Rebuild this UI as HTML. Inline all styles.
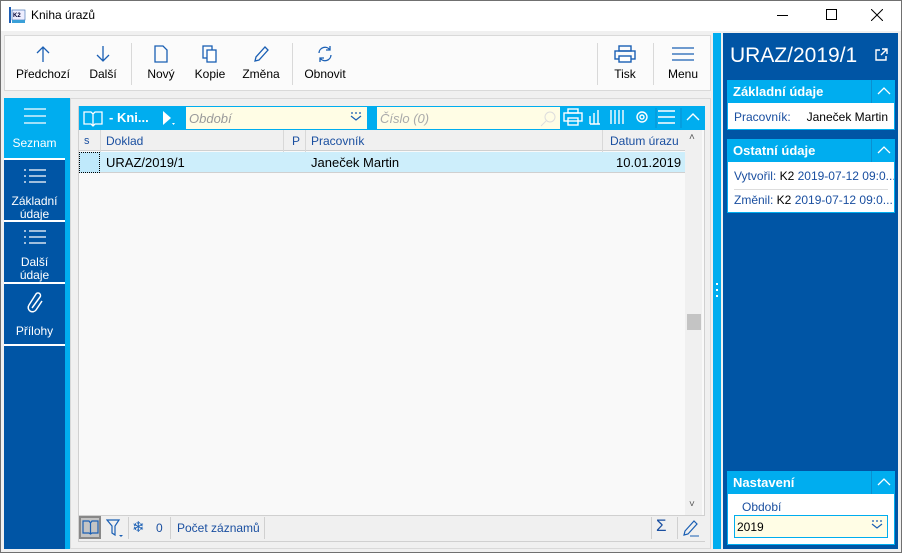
<!DOCTYPE html>
<html><head><meta charset="utf-8"><style>
*{box-sizing:border-box;margin:0;padding:0}
body{width:902px;height:553px;background:#f0f0f0;font-family:"Liberation Sans",sans-serif;font-size:12px;position:relative;overflow:hidden;color:#000}
.a{position:absolute}
.win{left:0;top:0;width:902px;height:553px;border:1px solid #707070}
.tb{left:4px;top:35px;width:707px;height:56px;background:#fbfbfb;border:1px solid #d9d9d9}
.btn{position:absolute;top:0;text-align:center;font-size:12px}
.btn svg{display:block;margin:9px auto 4px}
.sep{position:absolute;top:7px;width:1px;height:42px;background:#d9d9d9}
.nav{left:4px;top:98px;width:61px;height:451px;background:#0055a5}
.navi{position:absolute;left:4px;width:61px;color:#fff;text-align:center;font-size:12px;line-height:13px;border-bottom:2px solid #fff}
.hdr{background:#00adef;color:#fff;font-weight:bold;font-size:13px;height:23px;line-height:23px;padding-left:6px;position:relative}
.hdr .up{position:absolute;right:0;top:0;width:24px;height:23px;border-left:1px solid #0a8fd0}
.box{background:#fff;border:1px solid #00adef;border-top:none}
.blue{color:#1a4fa0}
</style></head><body>
<div class="a win"></div>
<div class="a" style="left:1px;top:1px;width:900px;height:30px;background:#fff"></div>
<svg class="a" style="left:9px;top:7px" width="17" height="17"><rect x="0" y="0" width="2" height="16" fill="#1f5fb5"/><rect x="3" y="3" width="13" height="10" fill="#eef" stroke="#3366aa" stroke-width=".6"/><text x="4" y="10" font-size="6" font-weight="bold" fill="#003">K2</text><rect x="3" y="13" width="13" height="3" fill="#3aa0d8"/></svg>
<div class="a" style="left:31px;top:8px;font-size:12px">Kniha úrazů</div>
<div class="a" style="left:777px;top:15px;width:11px;height:1px;background:#000"></div>
<div class="a" style="left:826px;top:9px;width:11px;height:11px;border:1px solid #000"></div>
<svg class="a" style="left:871px;top:9px" width="12" height="12"><path d="M0 0L12 12M12 0L0 12" stroke="#000" stroke-width="1"/></svg>
<div class="a tb">
 <div class="btn" style="left:8px;width:60px"><svg width="14" height="18"><path d="M7 2V17M1 8L7 2L13 8" stroke="#1a5fb4" fill="none" stroke-width="1.3"/></svg>Předchozí</div>
 <div class="btn" style="left:78px;width:40px"><svg width="14" height="18"><path d="M7 1V16M1 10L7 16L13 10" stroke="#1a5fb4" fill="none" stroke-width="1.3"/></svg>Další</div>
 <div class="sep" style="left:126px"></div>
 <div class="btn" style="left:136px;width:40px"><svg width="14" height="18"><path d="M1 1H9L13 5V17H1Z" stroke="#1a5fb4" fill="none" stroke-width="1.3"/></svg>Nový</div>
 <div class="btn" style="left:185px;width:40px"><svg width="16" height="18"><rect x="1" y="1" width="9" height="12" stroke="#1a5fb4" fill="none" stroke-width="1.3"/><rect x="5" y="5" width="9" height="12" stroke="#1a5fb4" fill="#fff" stroke-width="1.3"/></svg>Kopie</div>
 <div class="btn" style="left:233px;width:46px"><svg width="16" height="18"><path d="M2 16L3 12L12 2L15 5L6 15Z" stroke="#1a5fb4" fill="none" stroke-width="1.3"/></svg>Změna</div>
 <div class="sep" style="left:287px"></div>
 <div class="btn" style="left:295px;width:50px"><svg width="18" height="18"><path d="M3 8A6 6 0 0 1 14 5M15 10A6 6 0 0 1 4 13M14 1V5H10M4 17V13H8" stroke="#1a5fb4" fill="none" stroke-width="1.3"/></svg>Obnovit</div>
 <div class="sep" style="left:592px"></div>
 <div class="btn" style="left:600px;width:40px"><svg width="22" height="18"><rect x="5" y="1" width="12" height="5" stroke="#1a5fb4" fill="none" stroke-width="1.4"/><rect x="1" y="6" width="20" height="8" stroke="#1a5fb4" fill="none" stroke-width="1.4"/><rect x="5" y="11" width="12" height="6" stroke="#1a5fb4" fill="#fff" stroke-width="1.4"/></svg>Tisk</div>
 <div class="sep" style="left:648px"></div>
 <div class="btn" style="left:656px;width:44px"><svg width="22" height="18"><path d="M0 3H22M0 9H22M0 15H22" stroke="#1a5fb4" stroke-width="1.3"/></svg>Menu</div>
</div>
<div class="a nav"></div>
<div class="a" style="left:65px;top:98px;width:5px;height:451px;background:#00adef"></div>
<div class="a navi" style="top:98px;height:62px;background:#00adef"><svg width="22" height="20" style="display:block;margin:9px auto 10px"><path d="M0 2H22M0 9H22M0 16H22" stroke="#fff" stroke-width="1.3"/></svg>Seznam</div>
<div class="a navi" style="top:160px;height:62px"><svg width="22" height="18" style="display:block;margin:8px auto 9px"><path d="M0 2H2M5 2H22M0 8H2M5 8H22M0 14H2M5 14H22" stroke="#fff" stroke-width="1.3"/></svg>Základní<br>údaje</div>
<div class="a navi" style="top:222px;height:62px"><svg width="22" height="18" style="display:block;margin:7px auto 9px"><path d="M0 2H2M5 2H22M0 8H2M5 8H22M0 14H2M5 14H22" stroke="#fff" stroke-width="1.3"/></svg>Další<br>údaje</div>
<div class="a navi" style="top:284px;height:62px"><svg width="18" height="22" style="display:block;margin:8px auto 11px"><path d="M6 16L14 5A2.5 2.5 0 0 0 10 2L3 13A4 4 0 0 0 10 18L16 9" stroke="#fff" fill="none" stroke-width="1.5"/></svg>Přílohy</div>
<div class="a" style="left:70px;top:98px;width:641px;height:451px;background:#f0f0f0;border:1px solid #d9d9d9"></div>
<div class="a" style="left:78px;top:106px;width:627px;height:436px;background:#f9f9f9;border:1px solid #d0d0d0"></div>
<div class="a" style="left:79px;top:106px;width:626px;height:24px;background:#00adef"></div>
<svg class="a" style="left:83px;top:110px" width="20" height="17"><path d="M1 2H8L10 4L12 2H19V14H12L10 16L8 14H1ZM10 4V16" stroke="#fff" fill="none" stroke-width="1.3"/></svg>
<div class="a" style="left:109px;top:110px;color:#fff;font-weight:bold;font-size:13px">- Kni...</div>
<svg class="a" style="left:162px;top:110px" width="16" height="17"><path d="M1 1L9 8L1 15Z" fill="#fff"/><path d="M10 13L13 13L11.5 15Z" fill="#fff"/></svg>
<div class="a" style="left:186px;top:107px;width:181px;height:22px;background:#fffde5"></div>
<div class="a" style="left:189px;top:111px;color:#999;font-style:italic;font-size:13px">Období</div>
<svg class="a" style="left:350px;top:112px" width="12" height="10"><path d="M1 1H3M5 1H7M9 1H11M1 4L6 8L11 4" stroke="#1a5fb4" fill="none" stroke-width="1.2"/></svg>
<div class="a" style="left:377px;top:107px;width:183px;height:22px;background:#fffde5"></div>
<div class="a" style="left:380px;top:111px;color:#aaa;font-style:italic;font-size:13px">Číslo (0)</div>
<svg class="a" style="left:540px;top:111px" width="16" height="16"><circle cx="10" cy="6" r="5" stroke="#ddd" fill="none"/><path d="M6 10L1 15" stroke="#ddd"/></svg>
<svg class="a" style="left:563px;top:108px" width="142" height="20"><g stroke="#fff" fill="none" stroke-width="1.4"><rect x="5" y="1" width="10" height="4"/><rect x="1" y="5" width="18" height="8"/><rect x="5" y="10" width="10" height="7"/><path d="M27 8V16M31 5V16M35 2V16M27 16H37"/><path d="M48 2V16M52 2V16M56 2V16M60 2V16"/><circle cx="79" cy="9" r="5"/><circle cx="79" cy="9" r="2"/><path d="M95 3H112M95 9H112M95 15H112"/><path d="M124 12L130 6L136 12"/></g><path d="M93 0V20M118 0V20" stroke="#0a8fd0"/></svg>
<div class="a" style="left:79px;top:130px;width:606px;height:21px;background:#f0f0f0;border-bottom:1px solid #d0d0d0"></div>
<div class="a blue" style="left:84px;top:135px;font-size:11px">s</div>
<div class="a" style="left:100px;top:130px;width:1px;height:43px;background:#d8d8d8"></div>
<div class="a blue" style="left:106px;top:134px">Doklad</div>
<div class="a" style="left:283px;top:130px;width:1px;height:43px;background:#d8d8d8"></div>
<div class="a blue" style="left:292px;top:134px">P</div>
<div class="a" style="left:305px;top:130px;width:1px;height:43px;background:#d8d8d8"></div>
<div class="a blue" style="left:311px;top:134px">Pracovník</div>
<div class="a" style="left:602px;top:130px;width:1px;height:43px;background:#d8d8d8"></div>
<div class="a blue" style="left:610px;top:134px">Datum úrazu</div>
<div class="a" style="left:79px;top:152px;width:606px;height:21px;background:#cdeefb;border-bottom:1px solid #d0d0d0"></div>
<div class="a" style="left:79px;top:152px;width:21px;height:21px;border:1px dotted #000;background:#bfe9fb"></div>
<div class="a" style="left:106px;top:155px;font-size:13px">URAZ/2019/1</div>
<div class="a" style="left:311px;top:155px;font-size:13px">Janeček Martin</div>
<div class="a" style="left:616px;top:155px;font-size:13px">10.01.2019</div>
<div class="a" style="left:685px;top:130px;width:17px;height:385px;background:#f0f0f0"></div>
<div class="a" style="left:689px;top:132px;font-size:10px;color:#555">˄</div>
<div class="a" style="left:687px;top:314px;width:14px;height:16px;background:#c4c4c4"></div>
<div class="a" style="left:689px;top:499px;font-size:10px;color:#555">˅</div>
<div class="a" style="left:79px;top:515px;width:626px;height:26px;background:#f0f0f0;border-top:1px solid #d0d0d0"></div>
<div class="a" style="left:79px;top:516px;width:22px;height:23px;background:#c4c4c4;border:2px solid #888"></div>
<svg class="a" style="left:82px;top:520px" width="17" height="15"><path d="M1 1H7L8.5 3L10 1H16V13H10L8.5 14L7 13H1ZM8.5 3V14" stroke="#1a5fb4" fill="none" stroke-width="1.2"/></svg>
<svg class="a" style="left:106px;top:519px" width="20" height="20"><path d="M1 1H13L9 7V16L6 14V7Z" stroke="#1a5fb4" fill="none" stroke-width="1.2"/><path d="M13 16H17L15 18Z" fill="#1a5fb4"/></svg>
<div class="a" style="left:128px;top:517px;width:1px;height:22px;background:#d0d0d0"></div>
<div class="a" style="left:132px;top:518px;color:#1a5fb4;font-size:15px">❄</div>
<div class="a blue" style="left:156px;top:521px">0</div>
<div class="a" style="left:170px;top:517px;width:1px;height:22px;background:#d0d0d0"></div>
<div class="a blue" style="left:177px;top:521px">Počet záznamů</div>
<div class="a" style="left:264px;top:517px;width:1px;height:22px;background:#d0d0d0"></div>
<div class="a" style="left:651px;top:517px;width:1px;height:22px;background:#d0d0d0"></div>
<div class="a blue" style="left:656px;top:516px;font-size:17px">Σ</div>
<div class="a" style="left:677px;top:517px;width:1px;height:22px;background:#d0d0d0"></div>
<svg class="a" style="left:682px;top:518px" width="18" height="20"><path d="M2 17L3 13L12 3L15 6L6 16Z" stroke="#1a5fb4" fill="none" stroke-width="1.2"/><path d="M8 18H17" stroke="#1a5fb4"/></svg>
<div class="a" style="left:713px;top:33px;width:8px;height:516px;background:#00adef"></div>
<div class="a" style="left:716px;top:283px;width:2px;height:2px;background:#fff;box-shadow:0 6px #fff,0 12px #fff"></div>
<div class="a" style="left:723px;top:33px;width:175px;height:516px;background:#0055a5"></div>
<div class="a" style="left:730px;top:44px;color:#fff;font-size:21px">URAZ/2019/1</div>
<svg class="a" style="left:875px;top:48px" width="13" height="13"><path d="M5 2H1V12H11V8M7 1H12V6M12 1L6 7" stroke="#fff" fill="none" stroke-width="1.4"/></svg>
<div class="a" style="left:727px;top:80px;width:168px">
 <div class="hdr">Základní údaje<div class="up"><svg width="24" height="23"><path d="M6 14L12 8L18 14" stroke="#fff" fill="none" stroke-width="1.3"/></svg></div></div>
 <div class="box" style="height:27px;padding:7px 6px 0"><span class="blue">Pracovník:</span><span style="float:right">Janeček Martin</span></div>
</div>
<div class="a" style="left:727px;top:139px;width:168px">
 <div class="hdr">Ostatní údaje<div class="up"><svg width="24" height="23"><path d="M6 14L12 8L18 14" stroke="#fff" fill="none" stroke-width="1.3"/></svg></div></div>
 <div class="box" style="height:51px;padding:7px 6px 0;white-space:nowrap;overflow:hidden">
  <div style="border-bottom:1px solid #ddd;height:21px"><span class="blue">Vytvořil:</span> K2 <span class="blue">2019-07-12 09:0...</span></div>
  <div style="margin-top:3px;border-bottom:1px solid #ddd;height:20px"><span class="blue">Změnil:</span> K2 <span class="blue">2019-07-12 09:0...</span></div>
 </div>
</div>
<div class="a" style="left:727px;top:471px;width:168px">
 <div class="hdr">Nastavení<div class="up"><svg width="24" height="23"><path d="M6 14L12 8L18 14" stroke="#fff" fill="none" stroke-width="1.3"/></svg></div></div>
 <div class="box" style="height:51px;position:relative">
  <div class="a blue" style="left:14px;top:6px">Období</div>
  <div class="a" style="left:6px;top:21px;width:154px;height:23px;background:#fffde5;border:1px solid #00adef;padding:4px 2px;font-size:12px">2019</div>
  <svg class="a" style="left:143px;top:26px" width="12" height="10"><path d="M1 1H3M5 1H7M9 1H11M1 4L6 8L11 4" stroke="#1a5fb4" fill="none" stroke-width="1.2"/></svg>
 </div>
</div>
</body></html>
